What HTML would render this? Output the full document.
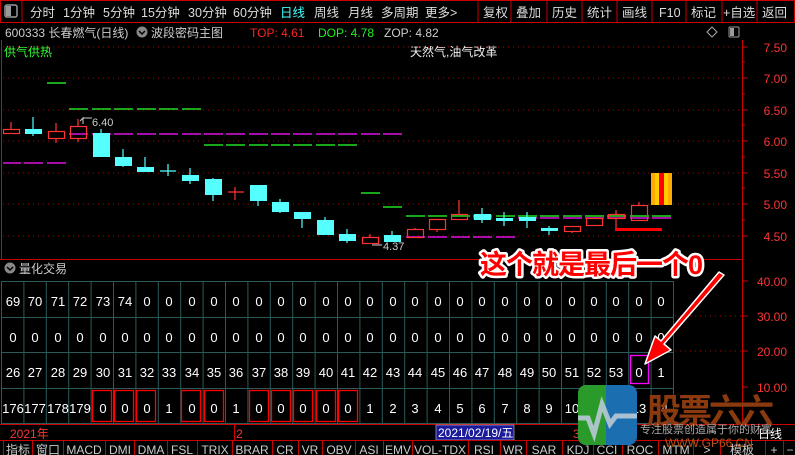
<!DOCTYPE html>
<html><head><meta charset="utf-8"><style>
*{margin:0;padding:0;box-sizing:border-box}
body{width:795px;height:455px;background:#000;overflow:hidden;position:relative;font-family:"Liberation Sans","Noto Sans CJK SC",sans-serif;font-size:12px;color:#ddd}
.a{position:absolute;white-space:nowrap}
</style></head><body>
<svg class="a" style="left:0;top:0" width="795" height="455" xmlns="http://www.w3.org/2000/svg" font-family="Liberation Sans, Noto Sans CJK SC, sans-serif">
<rect x="0.5" y="0.5" width="794" height="22" fill="#000" stroke="#c00"/>
<rect x="5" y="5" width="12" height="12" rx="2" fill="none" stroke="#999" stroke-width="1.5"/>
<rect x="6" y="6" width="5" height="10" fill="#999"/>
<line x1="22" y1="0" x2="22" y2="22" stroke="#c00"/>
<g font-size="12.5" fill="#ddd">
<text x="30" y="17">分时</text><text x="63" y="17">1分钟</text><text x="103" y="17">5分钟</text><text x="141" y="17">15分钟</text><text x="188" y="17">30分钟</text><text x="233" y="17">60分钟</text><text x="280" y="17" fill="#4ff">日线</text><text x="314" y="17">周线</text><text x="348" y="17">月线</text><text x="381" y="17">多周期</text><text x="425" y="17">更多&gt;</text>
<text x="483" y="17">复权</text><text x="516" y="17">叠加</text><text x="552" y="17">历史</text><text x="587" y="17">统计</text><text x="622" y="17">画线</text><text x="659" y="17">F10</text><text x="691" y="17">标记</text><text x="723" y="17">+自选</text><text x="762" y="17">返回</text>
</g>
<g stroke="#c00"><line x1="478" y1="0" x2="478" y2="22"/><line x1="511" y1="0" x2="511" y2="22"/><line x1="547" y1="0" x2="547" y2="22"/><line x1="582" y1="0" x2="582" y2="22"/><line x1="617" y1="0" x2="617" y2="22"/><line x1="652" y1="0" x2="652" y2="22"/><line x1="686" y1="0" x2="686" y2="22"/><line x1="722" y1="0" x2="722" y2="22"/><line x1="757" y1="0" x2="757" y2="22"/></g>
<text x="5" y="37" font-size="12" fill="#ccc">600333 长春燃气(日线)</text>
<circle cx="142" cy="32" r="5.5" fill="#888"/><path d="M139 31 l3 3 3-3" stroke="#000" stroke-width="1.5" fill="none"/>
<text x="151" y="37" font-size="12" fill="#ccc">波段密码主图</text>
<text x="250" y="37" font-size="12" fill="#f22">TOP: 4.61</text>
<text x="318" y="37" font-size="12" fill="#2e2">DOP: 4.78</text>
<text x="384" y="37" font-size="12" fill="#ccc">ZOP: 4.82</text>
<path d="M712 27 l5 5 -5 5 -5 -5z" fill="none" stroke="#aaa"/>
<rect x="729" y="27" width="10" height="10" rx="1" fill="none" stroke="#999"/><rect x="730" y="28" width="4" height="8" fill="#999"/>
<text x="4" y="56" font-size="12" fill="#3f3">供气供热</text>
<text x="410" y="56" font-size="12" fill="#eee">天然气,油气改革</text>
<g stroke="#a00" stroke-dasharray="1 4">
<line x1="3" y1="47" x2="742" y2="47"/><line x1="3" y1="78" x2="742" y2="78"/><line x1="3" y1="110" x2="742" y2="110"/><line x1="3" y1="141" x2="742" y2="141"/><line x1="3" y1="173" x2="742" y2="173"/><line x1="3" y1="204" x2="742" y2="204"/><line x1="3" y1="236" x2="742" y2="236"/>
<line x1="675" y1="316" x2="742" y2="316"/><line x1="675" y1="351" x2="742" y2="351"/>
</g>
<line x1="1.5" y1="40" x2="1.5" y2="260" stroke="#444"/>
<line x1="742.5" y1="40" x2="742.5" y2="425" stroke="#c00"/>
<g stroke="#c00"><line x1="742" y1="47" x2="748" y2="47"/><line x1="742" y1="78" x2="748" y2="78"/><line x1="742" y1="110" x2="748" y2="110"/><line x1="742" y1="141" x2="748" y2="141"/><line x1="742" y1="173" x2="748" y2="173"/><line x1="742" y1="204" x2="748" y2="204"/><line x1="742" y1="236" x2="748" y2="236"/>
<line x1="742" y1="62" x2="745" y2="62"/><line x1="742" y1="94" x2="745" y2="94"/><line x1="742" y1="125" x2="745" y2="125"/><line x1="742" y1="157" x2="745" y2="157"/><line x1="742" y1="188" x2="745" y2="188"/><line x1="742" y1="220" x2="745" y2="220"/>
<line x1="742" y1="281" x2="748" y2="281"/><line x1="742" y1="316" x2="748" y2="316"/><line x1="742" y1="351" x2="748" y2="351"/><line x1="742" y1="387" x2="748" y2="387"/></g>
<g font-size="12" fill="#f33" text-anchor="end">
<text x="787" y="52">7.50</text><text x="787" y="83">7.00</text><text x="787" y="115">6.50</text><text x="787" y="146">6.00</text><text x="787" y="178">5.50</text><text x="787" y="209">5.00</text><text x="787" y="241">4.50</text>
<text x="787" y="286">40.00</text><text x="787" y="321">30.00</text><text x="787" y="356">20.00</text><text x="787" y="392">10.00</text>
</g>
<g stroke-width="1.5">
<path d="M47 83h19" stroke="#2d2"/>
<path d="M69 109h19M92 109h19M114 109h19M137 109h19M159 109h19M182 109h19" stroke="#2d2"/>
<path d="M3 163h18M24 163h19M47 163h19" stroke="#d1d"/>
<path d="M69 134h19M92 134h19M114 134h19M137 134h19M159 134h19M182 134h19M204 134h19M226 134h19M249 134h19M271 134h19M293 134h19M316 134h19M338 134h19M361 134h19M383 134h19" stroke="#d1d"/>
<path d="M204 145h19M226 145h19M249 145h19M271 145h19M293 145h19M316 145h19M338 145h19" stroke="#2d2"/>
<path d="M361 193h19" stroke="#2d2"/><path d="M383 207h19" stroke="#2d2"/>
<path d="M406 216h19M428 216h19M451 216h19M473 216h19M496 216h19M518 216h19M540 216h19M563 216h19M585 216h19M607 216h19M630 216h19M652 216h19" stroke="#2d2"/>
<path d="M406 237h19M428 237h19M451 237h19M473 237h19M496 237h19" stroke="#d1d"/>
<path d="M518 218h19M540 218h19M563 218h19M585 218h19M607 218h19M630 218h19M652 218h19M473 218h19" stroke="#d1d"/>
</g>
<g stroke="#f33" fill="none" stroke-width="1.2">
<path d="M11 122v7"/><rect x="3.5" y="129.5" width="16" height="4"/>
<path d="M56 123v8M56 138v5"/><rect x="48.5" y="131.5" width="16" height="7"/>
<path d="M78 119v7M78 138v4"/><rect x="70.5" y="126.5" width="16" height="12"/>
<path d="M235 187v13M228 192h16"/>
<path d="M370 234v3"/><rect x="362.5" y="237.5" width="16" height="6"/>
<rect x="407.5" y="229.5" width="16" height="8"/><path d="M415 228v2"/>
<rect x="429.5" y="219.5" width="16" height="10"/><path d="M437 229v3"/>
<rect x="451.5" y="214.5" width="16" height="5"/><path d="M459 200v14"/>
<rect x="564.5" y="226.5" width="16" height="5"/><path d="M572 231v2"/>
<rect x="586.5" y="218.5" width="16" height="7"/>
<rect x="608.5" y="214.5" width="16" height="4"/><path d="M616 210v4M616 218v11"/>
<rect x="631.5" y="205.5" width="16" height="15"/><path d="M639 202v3"/>
</g>
<g fill="#5ff" stroke="#5ff">
<path d="M33 117v19" stroke-width="1.2"/><rect x="25" y="129" width="17" height="5" stroke="none"/>
<path d="M101 129v4" stroke-width="1.2"/><rect x="93" y="133" width="17" height="24" stroke="none"/>
<path d="M123 149v18" stroke-width="1.2"/><rect x="115" y="157" width="17" height="9" stroke="none"/>
<path d="M145 157v10" stroke-width="1.2"/><rect x="137" y="167" width="17" height="5" stroke="none"/>
<path d="M168 164v12M160 171h16" stroke-width="1.2"/>
<path d="M190 168v16" stroke-width="1.2"/><rect x="182" y="175" width="17" height="6" stroke="none"/>
<path d="M213 178v23" stroke-width="1.2"/><rect x="205" y="179" width="17" height="16" stroke="none"/>
<path d="M258 201v5" stroke-width="1.2"/><rect x="250" y="185" width="17" height="16" stroke="none"/>
<path d="M280 199v14" stroke-width="1.2"/><rect x="272" y="202" width="17" height="10" stroke="none"/>
<path d="M302 219v9" stroke-width="1.2"/><rect x="294" y="212" width="17" height="7" stroke="none"/>
<path d="M325 217v3" stroke-width="1.2"/><rect x="317" y="220" width="17" height="15" stroke="none"/>
<path d="M347 229v14" stroke-width="1.2"/><rect x="339" y="234" width="17" height="7" stroke="none"/>
<path d="M392 231v4" stroke-width="1.2"/><rect x="384" y="235" width="17" height="7" stroke="none"/>
<path d="M482 208v15" stroke-width="1.2"/><rect x="474" y="214" width="17" height="6" stroke="none"/>
<path d="M504 212v14" stroke-width="1.2"/><rect x="496" y="218" width="17" height="3" stroke="none"/>
<path d="M527 212v16" stroke-width="1.2"/><rect x="519" y="217" width="17" height="4" stroke="none"/>
<path d="M549 226v9" stroke-width="1.2"/><rect x="541" y="228" width="17" height="3" stroke="none"/>
</g>
<rect x="615" y="228" width="47" height="3" fill="#f00"/>
<rect x="651" y="173" width="21" height="32" fill="#fa0"/><rect x="655" y="173" width="13" height="32" fill="#fc0"/><rect x="659" y="173" width="5" height="32" fill="#f00"/>
<text x="92" y="126" font-size="11" fill="#ccc">6.40</text><path d="M80 121l3-3v6M83 118h9" stroke="#ccc" fill="none"/>
<text x="383" y="250" font-size="11" fill="#ccc">4.37</text><path d="M372 245h10" stroke="#ccc"/>
<line x1="0" y1="259.5" x2="742" y2="259.5" stroke="#c00"/>
<circle cx="10" cy="268" r="5.5" fill="#888"/><path d="M7 267 l3 3 3-3" stroke="#000" stroke-width="1.5" fill="none"/>
<text x="19" y="273" font-size="12" fill="#ccc">量化交易</text>
<g stroke="#2a5a5a" stroke-width="1">
<line x1="1" y1="281.5" x2="673" y2="281.5"/><line x1="1" y1="317.5" x2="673" y2="317.5"/><line x1="1" y1="352.5" x2="673" y2="352.5"/><line x1="1" y1="388.5" x2="673" y2="388.5"/><line x1="1" y1="423.5" x2="673" y2="423.5"/>
<path d="M1.5 281v142M23.9 281v142M46.3 281v142M68.7 281v142M91.1 281v142M113.5 281v142M135.9 281v142M158.3 281v142M180.7 281v142M203.1 281v142M225.5 281v142M247.9 281v142M270.3 281v142M292.7 281v142M315.1 281v142M337.5 281v142M359.9 281v142M382.3 281v142M404.7 281v142M427.1 281v142M449.5 281v142M471.9 281v142M494.3 281v142M516.7 281v142M539.1 281v142M561.5 281v142M583.9 281v142M606.3 281v142M628.7 281v142M651.1 281v142M673.5 281v142"/>
</g>
<g font-size="13" fill="#fff" text-anchor="middle">
<g transform="translate(0,306)">
<text x="13">69</text><text x="35">70</text><text x="58">71</text><text x="80">72</text><text x="103">73</text><text x="125">74</text><text x="147">0</text><text x="169">0</text><text x="192">0</text><text x="214">0</text><text x="236">0</text><text x="259">0</text><text x="281">0</text><text x="303">0</text><text x="326">0</text><text x="348">0</text><text x="370">0</text><text x="393">0</text><text x="415">0</text><text x="438">0</text><text x="460">0</text><text x="482">0</text><text x="505">0</text><text x="527">0</text><text x="549">0</text><text x="572">0</text><text x="594">0</text><text x="616">0</text><text x="639">0</text><text x="661">0</text></g>
<g transform="translate(0,342)">
<text x="13">0</text><text x="35">0</text><text x="58">0</text><text x="80">0</text><text x="103">0</text><text x="125">0</text><text x="147">0</text><text x="169">0</text><text x="192">0</text><text x="214">0</text><text x="236">0</text><text x="259">0</text><text x="281">0</text><text x="303">0</text><text x="326">0</text><text x="348">0</text><text x="370">0</text><text x="393">0</text><text x="415">0</text><text x="438">0</text><text x="460">0</text><text x="482">0</text><text x="505">0</text><text x="527">0</text><text x="549">0</text><text x="572">0</text><text x="594">0</text><text x="616">0</text><text x="639">0</text><text x="661">0</text></g>
<g transform="translate(0,377)">
<text x="13">26</text><text x="35">27</text><text x="58">28</text><text x="80">29</text><text x="103">30</text><text x="125">31</text><text x="147">32</text><text x="169">33</text><text x="192">34</text><text x="214">35</text><text x="236">36</text><text x="259">37</text><text x="281">38</text><text x="303">39</text><text x="326">40</text><text x="348">41</text><text x="370">42</text><text x="393">43</text><text x="415">44</text><text x="438">45</text><text x="460">46</text><text x="482">47</text><text x="505">48</text><text x="527">49</text><text x="549">50</text><text x="572">51</text><text x="594">52</text><text x="616">53</text><text x="639">0</text><text x="661">1</text></g>
<g transform="translate(0,413)">
<text x="13">176</text><text x="35">177</text><text x="58">178</text><text x="80">179</text><text x="103">0</text><text x="125">0</text><text x="147">0</text><text x="169">1</text><text x="192">0</text><text x="214">0</text><text x="236">1</text><text x="259">0</text><text x="281">0</text><text x="303">0</text><text x="326">0</text><text x="348">0</text><text x="370">1</text><text x="393">2</text><text x="415">3</text><text x="438">4</text><text x="460">5</text><text x="482">6</text><text x="505">7</text><text x="527">8</text><text x="549">9</text><text x="572">10</text><text x="594">11</text><text x="616">12</text><text x="639">13</text><text x="661">14</text></g>
</g>
<g fill="none" stroke="#f00" stroke-width="1.3">
<rect x="92.5" y="390.5" width="19" height="31"/><rect x="114.5" y="390.5" width="19" height="31"/><rect x="136.5" y="390.5" width="19" height="31"/>
<rect x="181.5" y="390.5" width="19" height="31"/><rect x="204.5" y="390.5" width="19" height="31"/>
<rect x="249.5" y="390.5" width="19" height="31"/><rect x="271.5" y="390.5" width="19" height="31"/><rect x="293.5" y="390.5" width="19" height="31"/><rect x="316.5" y="390.5" width="19" height="31"/><rect x="338.5" y="390.5" width="19" height="31"/>
</g>
<rect x="630.5" y="355.5" width="18" height="28" fill="none" stroke="#f0f" stroke-width="1.3"/>
<line x1="0" y1="424.5" x2="795" y2="424.5" stroke="#c00"/>
<line x1="234.5" y1="425" x2="234.5" y2="440" stroke="#c00"/>
<text x="10" y="438" font-size="12" fill="#f33">2021年</text>
<text x="236" y="438" font-size="12" fill="#f33">2</text>
<rect x="436" y="425" width="78" height="15" fill="#1a1a9a" stroke="#ccc" stroke-width="0.6"/>
<text x="438" y="437" font-size="12" fill="#fff">2021/02/19/五</text>
<text x="573" y="438" font-size="12" fill="#f33">3</text>
<text x="758" y="438" font-size="12" fill="#fff">日线</text>
<line x1="0" y1="440.5" x2="795" y2="440.5" stroke="#c00"/>
<g stroke="#c00"><path d="M3.5 441v14M32.5 441v14M63.5 441v14M105.5 441v14M134.5 441v14M167.5 441v14M197.5 441v14M232.5 441v14M272.5 441v14M298.5 441v14M322.5 441v14M355.5 441v14M383.5 441v14M412.5 441v14M468.5 441v14M500.5 441v14M526.5 441v14M562.5 441v14M593.5 441v14M622.5 441v14M658.5 441v14M693.5 441v14M720.5 441v14M765.5 441v14M783.5 441v14"/></g>
<g font-size="12" fill="#ccc" text-anchor="middle">
<text x="18" y="454">指标</text><text x="48" y="454">窗口</text><text x="84" y="454">MACD</text><text x="120" y="454">DMI</text><text x="151" y="454">DMA</text><text x="182" y="454">FSL</text><text x="215" y="454">TRIX</text><text x="252" y="454">BRAR</text><text x="285" y="454">CR</text><text x="310" y="454">VR</text><text x="339" y="454">OBV</text><text x="369" y="454">ASI</text><text x="398" y="454">EMV</text><text x="440" y="454">VOL-TDX</text><text x="484" y="454">RSI</text><text x="513" y="454">WR</text><text x="544" y="454">SAR</text><text x="578" y="454">KDJ</text><text x="607" y="454">CCI</text><text x="640" y="454">ROC</text><text x="676" y="454">MTM</text><text x="707" y="454">&gt;</text><text x="742" y="454">模板</text><text x="774" y="454">+</text><text x="790" y="454">−</text>
</g>
<rect x="578" y="385" width="59" height="60" rx="8" fill="#1b6fb0"/>
<path d="M586 385h20v60h-20a8 8 0 0 1-8-8v-44a8 8 0 0 1 8-8z" fill="#2a9a2a"/>
<path d="M578 418l10 0 6 16 8-30 8 20 6-8 21 0" stroke="#b9c9d6" stroke-width="5" fill="none" opacity="0.9"/>
<text x="647" y="423" font-size="34" font-weight="bold" fill="#8b3a10" letter-spacing="-3">股票六六</text>
<text x="640" y="433" font-size="11" fill="#aaa">专注股票创造属于你的财富</text>
<text x="665" y="447" font-size="12" fill="#b8501a">WWW.GP66.CN</text>
<text x="480" y="274" font-size="27" font-weight="bold" fill="#f00" stroke="#fff" stroke-width="5" paint-order="stroke" stroke-linejoin="round" letter-spacing="-1">这个就是最后一个0</text>
<path d="M724 275 L664 344 L671 350 L645 364 L655 336 L661 341 L719 272Z" fill="#f00" stroke="#fff" stroke-width="1.5" stroke-linejoin="round"/>
</svg>
</body></html>
